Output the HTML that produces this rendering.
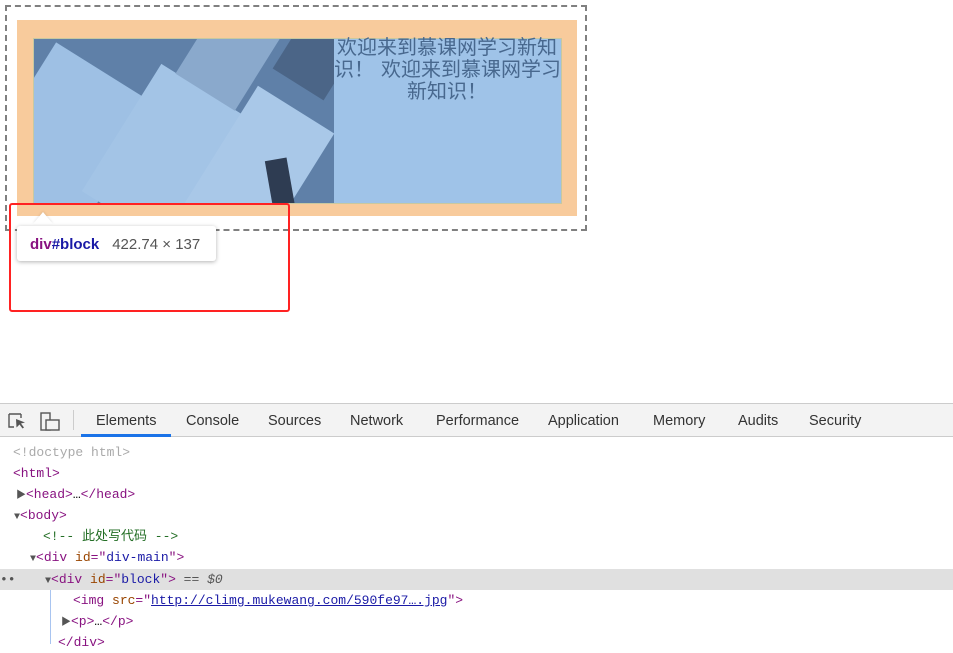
<!DOCTYPE html>
<html><head><meta charset="utf-8"><style>
body{margin:0;width:953px;height:644px;position:relative;background:#fff;overflow:hidden;font-family:"Liberation Sans","Noto Sans CJK SC",sans-serif}
.a{position:absolute}
.mono{font-family:"Liberation Mono","Noto Sans CJK SC",monospace;font-size:13px}
.row{position:absolute;height:21px;line-height:21px;white-space:pre}
.t{color:#881280}.at{color:#994500}.v{color:#1a1aa6}.g{color:#aaa}
.tab{position:absolute;top:403px;height:34px;line-height:36px;font-size:14.5px;color:#333}
.cn{position:absolute;font-size:20px;line-height:22px;color:#48688e;white-space:nowrap;font-family:"Noto Sans CJK SC",sans-serif}
</style></head><body>
<div class="a" style="left:5px;top:5px;width:578px;height:222px;border:2px dashed #808080"></div>
<div class="a" style="left:17px;top:20px;width:560px;height:196px;background:#f8cb9c"></div>
<div class="a" style="left:33px;top:38px;width:527px;height:164px;background:#9fc3e8;overflow:hidden;border:1px solid #c8c8a0">
 <div class="a" style="left:0;top:0;width:300px;height:165px;background:#5f80a8;overflow:hidden">
  <div class="a" style="left:-40px;top:20px;width:120px;height:200px;background:#9ec0e4;transform:rotate(32deg)"></div>
  <div class="a" style="left:80px;top:40px;width:100px;height:150px;background:#a3c4e6;transform:rotate(32deg)"></div>
  <div class="a" style="left:180px;top:60px;width:90px;height:140px;background:#a9c8e8;transform:rotate(32deg)"></div>
  <div class="a" style="left:160px;top:-30px;width:70px;height:90px;background:#8aa9cc;transform:rotate(32deg)"></div>
  <div class="a" style="left:235px;top:120px;width:22px;height:50px;background:#2e3c52;transform:rotate(-10deg)"></div>
  <div class="a" style="left:250px;top:-10px;width:60px;height:60px;background:#4b6587;transform:rotate(32deg)"></div>
 </div>
</div>
<div class="cn" style="left:337px;top:35px">欢迎来到慕课网学习新知</div>
<div class="cn" style="left:334px;top:57px">识！</div>
<div class="cn" style="left:381px;top:57px">欢迎来到慕课网学习</div>
<div class="cn" style="left:407px;top:79px">新知识！</div>
<div class="a" style="left:33px;top:212px;width:0;height:0;border-left:10px solid transparent;border-right:10px solid transparent;border-bottom:12px solid #fff;filter:drop-shadow(0 -1px 1px rgba(0,0,0,.1))"></div>
<div class="a" style="left:17px;top:226px;width:199px;height:35px;background:#fff;border-radius:3px;box-shadow:0 1px 4px rgba(0,0,0,.3);font-size:15px;line-height:38px;padding-left:13px;box-sizing:border-box;white-space:nowrap"><b style="color:#881280">div</b><b style="color:#1a1aa6">#block</b><span style="color:#555;margin-left:13px">422.74 × 137</span></div>
<div class="a" style="left:9px;top:203px;width:281px;height:109px;border:2.5px solid #f22;border-radius:3px;box-sizing:border-box"></div>

<div class="a" style="left:0;top:403px;width:953px;height:34px;background:#f3f3f3;border-top:1px solid #ccc;border-bottom:1px solid #ccc;box-sizing:border-box"></div>
<svg class="a" style="left:6px;top:410px" width="56" height="22"><path d="M3 4h12M3 4v13h5M15 4v4" stroke="#555" fill="none" stroke-width="1.4"/><path d="M10 9l9 3.5-4 1 3 4-1.5 1-3-4-3 3z" fill="#555"/><rect x="35" y="3" width="9" height="17" fill="none" stroke="#555" stroke-width="1.4"/><rect x="40" y="10" width="13" height="10" fill="#f3f3f3" stroke="#555" stroke-width="1.4"/></svg>
<div class="a" style="left:73px;top:410px;width:1px;height:20px;background:#ccc"></div>
<div class="tab" style="left:96px">Elements</div>
<div class="a" style="left:81px;top:434px;width:90px;height:3px;background:#1a73e8"></div>
<div class="tab" style="left:186px">Console</div>
<div class="tab" style="left:268px">Sources</div>
<div class="tab" style="left:350px">Network</div>
<div class="tab" style="left:436px">Performance</div>
<div class="tab" style="left:548px">Application</div>
<div class="tab" style="left:653px">Memory</div>
<div class="tab" style="left:738px">Audits</div>
<div class="tab" style="left:809px">Security</div>

<div class="a" style="left:0;top:569px;width:953px;height:21px;background:#e0e0e0"></div>
<div class="a" style="left:50px;top:590px;width:1px;height:54px;background:#a8c4f0"></div>
<div class="mono">
<div class="row g" style="left:13px;top:442px">&lt;!doctype html&gt;</div>
<div class="row t" style="left:13px;top:463px">&lt;html&gt;</div>
<div class="row" style="left:16px;top:484px"><span style="font-size:10px;color:#555">▶</span><span class="t">&lt;head&gt;</span>…<span class="t">&lt;/head&gt;</span></div>
<div class="row" style="left:14px;top:505px"><span style="font-size:10px;color:#555">▼</span><span class="t">&lt;body&gt;</span></div>
<div class="row" style="left:43px;top:526px;color:#236e25">&lt;!-- 此处写代码 --&gt;</div>
<div class="row" style="left:30px;top:547px"><span style="font-size:10px;color:#555">▼</span><span class="t">&lt;div </span><span class="at">id</span><span class="t">="</span><span class="v">div-main</span><span class="t">"&gt;</span></div>
<div class="row" style="left:0;top:569px;color:#555">••</div>
<div class="row" style="left:45px;top:569px"><span style="font-size:10px;color:#555">▼</span><span class="t">&lt;div </span><span class="at">id</span><span class="t">="</span><span class="v">block</span><span class="t">"&gt;</span><span style="color:#555"> == <i>$0</i></span></div>
<div class="row" style="left:73px;top:590px"><span class="t">&lt;img </span><span class="at">src</span><span class="t">="</span><span style="color:#1a1aa6;text-decoration:underline">http://climg.mukewang.com/590fe97….jpg</span><span class="t">"&gt;</span></div>
<div class="row" style="left:61px;top:611px"><span style="font-size:10px;color:#555">▶</span><span class="t">&lt;p&gt;</span>…<span class="t">&lt;/p&gt;</span></div>
<div class="row t" style="left:58px;top:632px">&lt;/div&gt;</div>
</div>
</body></html>
